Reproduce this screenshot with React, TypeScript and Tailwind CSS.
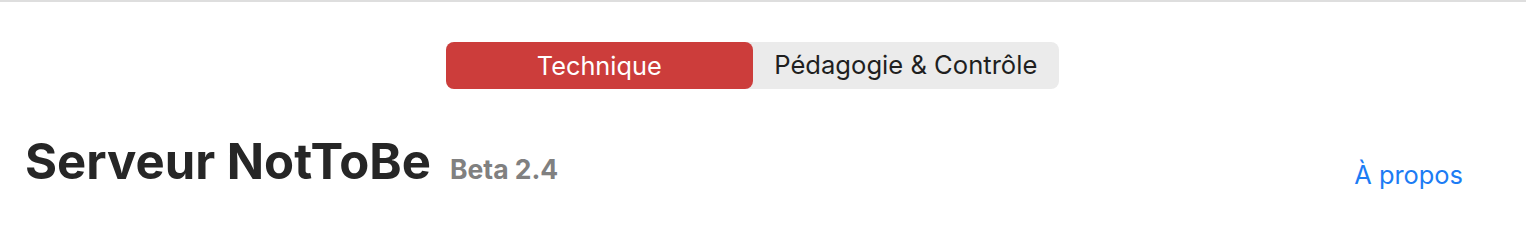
export default function App() {
  return (
    <div className="w-[1526px] h-[232px] bg-white border-t-2 border-[#dedede] font-['Inter',sans-serif] overflow-hidden">
      <div className="flex justify-center pr-[21px] pt-[40px]">
        <div className="grid grid-cols-2 w-[613px] h-[47px] rounded-lg bg-[#ebebeb]">
          <button className="rounded-lg bg-[#cc3d3b] text-white text-[25.3px]">Technique</button>
          <button className="rounded-lg text-[#1f1f1f] text-[25.6px]">Pédagogie &amp; Contrôle</button>
        </div>
      </div>

      <div className="flex items-end justify-between pl-[25px] pr-[63px] mt-[43px]">
        <h1 className="flex items-baseline gap-[19px]">
          <span className="text-[49px] leading-[60px] font-bold text-[#262626]">Serveur NotToBe</span>
          <span className="text-[26.5px] font-bold text-[#808080]">Beta 2.4</span>
        </h1>
        <a className="text-[25.4px] text-[#1c7cf4] mb-[-2px]">À propos</a>
      </div>
    </div>
  );
}
